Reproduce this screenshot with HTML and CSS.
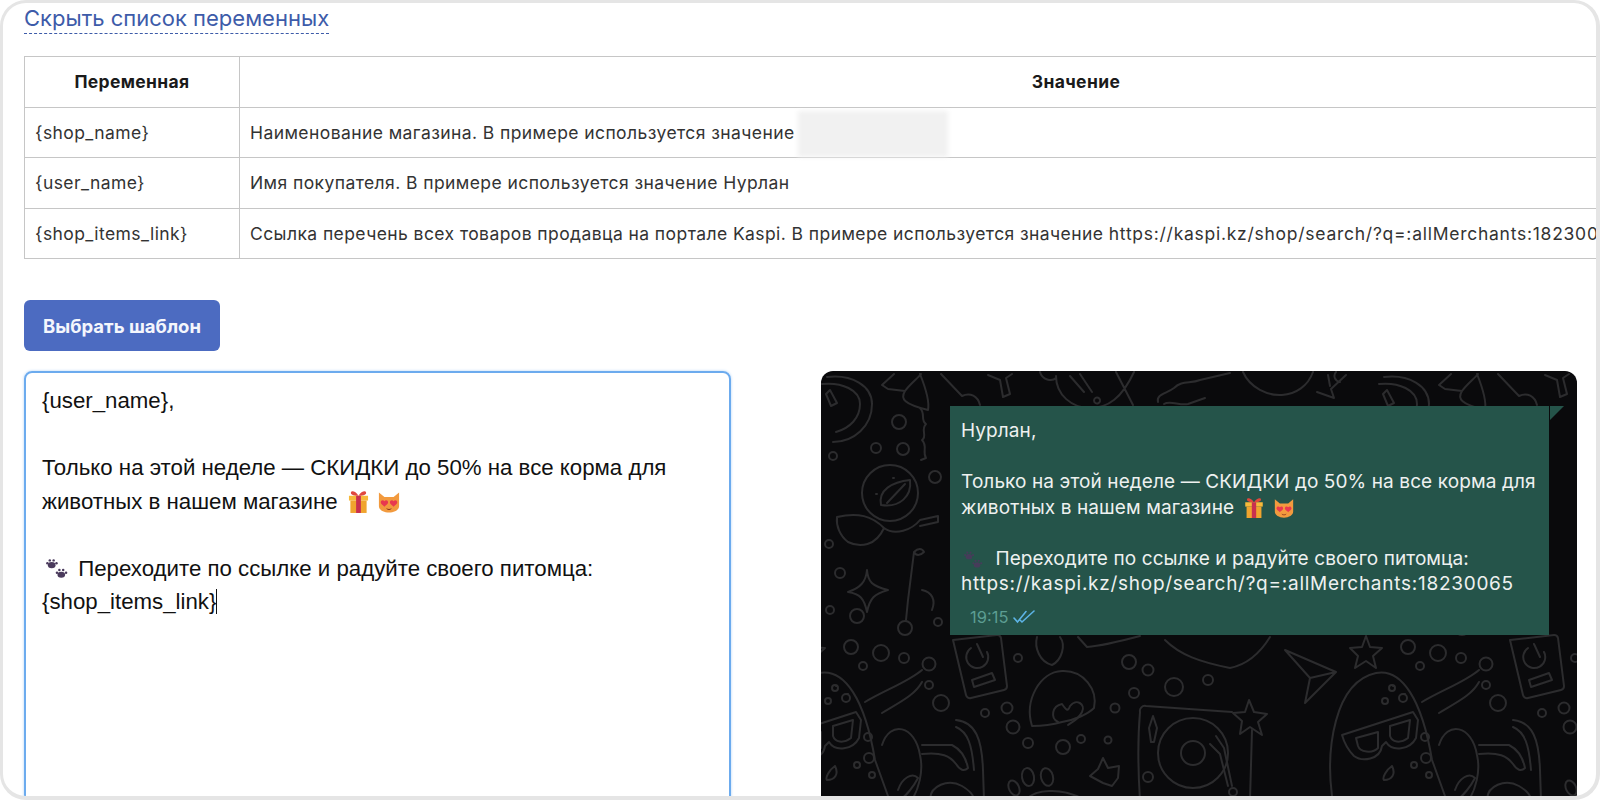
FILE: index.html
```html
<!DOCTYPE html>
<html lang="ru">
<head>
<meta charset="utf-8">
<title>Шаблон сообщения</title>
<link rel="stylesheet" href="styles.css">
</head>
<body>
<svg class="defs" width="0" height="0" aria-hidden="true">
  <defs>
    <symbol id="gift" viewBox="0 0 22 24">
      <path d="M11 6C8 1 3 0 3 3c0 2 4 3 8 3zm0 0c3-5 8-6 8-3 0 2-4 3-8 3z" fill="#e0483e"/>
      <rect x="1" y="6" width="20" height="5" fill="#f7b93a"/>
      <rect x="2.500" y="11" width="17" height="13" fill="#f0a42e"/>
      <rect x="8.500" y="6" width="5" height="18" fill="#c9304f"/>
    </symbol>
    <symbol id="cat" viewBox="0 0 24 22">
      <path d="M1 0l6 5h10l6-5v15c0 4-5 7-11 7S1 19 1 15z" fill="#f29a3e"/>
      <path d="M3 11c0-3 3-3 4-1.500C8 8 11 8 11 11c0 2-3 3-4 4.500C6 14 3 13 3 11zm10 0c0-3 3-3 4-1.500 1-1.500 4-1.500 4 1.500 0 2-3 3-4 4.500C16 14 13 13 13 11z" fill="#e8384f"/>
      <path d="M9 17c2 1.500 4 1.500 6 0-1 3-5 3-6 0z" fill="#8c3a1e"/>
    </symbol>
    <symbol id="paws" viewBox="0 0 24 22">
      <g fill="#4a3a5c">
        <ellipse cx="7" cy="7" rx="4" ry="3.200"/><circle cx="2.500" cy="5" r="1.300"/><circle cx="5" cy="2" r="1.300"/><circle cx="9" cy="2" r="1.300"/><circle cx="12" cy="5" r="1.300"/>
        <ellipse cx="17" cy="17" rx="4" ry="3.200"/><circle cx="12.500" cy="15" r="1.300"/><circle cx="15" cy="12" r="1.300"/><circle cx="19" cy="12" r="1.300"/><circle cx="22" cy="15" r="1.300"/>
      </g>
    </symbol>
  </defs>
</svg>
<div class="frame">
  <a class="toggle">Скрыть список переменных</a>
  <table class="vars">
    <thead>
      <tr><th class="col-name">Переменная</th><th>Значение</th></tr>
    </thead>
    <tbody>
      <tr><td>{shop_name}</td><td>Наименование магазина. В примере используется значение <span class="redact"></span></td></tr>
      <tr><td>{user_name}</td><td>Имя покупателя. В примере используется значение Нурлан</td></tr>
      <tr><td>{shop_items_link}</td><td>Ссылка перечень всех товаров продавца на портале Kaspi. В примере используется значение <span class="url-wide">https://kaspi.kz/shop/search/?q=:allMerchants:18230065</span></td></tr>
    </tbody>
  </table>
  <button class="pick" type="button">Выбрать шаблон</button>
  <div class="editor-row">
    <div class="editor">{user_name},<br><br>Только на этой неделе — СКИДКИ до 50% на все корма для<br>животных в нашем магазине <svg class="emoji e-gift"><use href="#gift"/></svg> <svg class="emoji e-cat"><use href="#cat"/></svg><br><br><svg class="emoji e-paws"><use href="#paws"/></svg> Переходите по ссылке и радуйте своего питомца:<br><span class="caret">{shop_items_link}</span></div>
    <div class="chat">
      <svg class="wallpaper" viewBox="821 371 756 440" fill="none" stroke="#2c2c2e" stroke-width="2" stroke-linecap="round" stroke-linejoin="round" aria-hidden="true">
        <defs>
          <g id="tile">
            <g id="dots">
              <circle cx="851" cy="647" r="7"/><circle cx="881" cy="653" r="8"/><circle cx="904" cy="658" r="5"/><circle cx="863" cy="666" r="4"/><circle cx="929" cy="664" r="6.500"/><circle cx="929" cy="685" r="4"/><circle cx="941" cy="703" r="8"/><circle cx="985" cy="713" r="4"/><circle cx="1007" cy="708" r="5.500"/><circle cx="1013" cy="727" r="6.500"/><circle cx="1028" cy="743" r="5"/><circle cx="1063" cy="747" r="7"/><circle cx="1081" cy="739" r="4"/><circle cx="1108" cy="740" r="3.500"/><circle cx="1115" cy="708" r="4.500"/><circle cx="1134" cy="693" r="5"/><circle cx="1148" cy="670" r="5.500"/><circle cx="1129" cy="662" r="7"/><circle cx="1174" cy="687" r="9"/><circle cx="1208" cy="680" r="5"/><circle cx="1018" cy="658" r="4"/><circle cx="835" cy="688" r="3"/><circle cx="846" cy="698" r="4"/><circle cx="828" cy="701" r="3"/><circle cx="868" cy="737" r="4"/><circle cx="869" cy="758" r="5"/><circle cx="857" cy="765" r="3"/><circle cx="872" cy="775" r="3"/>
              <circle cx="899" cy="422" r="7"/><circle cx="876" cy="448" r="5"/><circle cx="903" cy="449" r="6"/><circle cx="833" cy="456" r="4"/><circle cx="935" cy="477" r="6"/><circle cx="829" cy="544" r="4"/><circle cx="840" cy="573" r="5"/><circle cx="830" cy="610" r="4"/><circle cx="857" cy="616" r="7"/><circle cx="905" cy="628" r="7"/><circle cx="938" cy="622" r="4"/><circle cx="1148" cy="777" r="5"/>
            </g>
            <!-- crescent -->
            <path d="M827 377C852 374 872 386 872 404 872 426 854 442 833 442M822 384C842 382 860 390 860 404 860 418 850 428 836 432M830 390l7 13-6 3-5-12z"/>
            <!-- top strip -->
            <path d="M894 374L882 385 888 389 905 391C910 384 918 378 921 374M905 391C900 399 904 404 928 410 930 400 924 384 920 374"/>
            <path d="M941 374L962 396C970 392 978 396 980 405"/>
            <path d="M988 375L1000 380 1003 397 1010 394 1006 378 1012 374"/>
            <path d="M1040 372C1042 380 1052 382 1056 378M1056 376C1056 395 1072 408 1090 408 1108 408 1122 398 1134 372M1070 376L1084 392M1080 374L1092 392M1100 400A3 3 0 1 0 1100 401M1116 372L1133 405"/>
            <path d="M1158 402C1156 394 1166 394 1174 388 1182 380 1190 384 1200 380L1230 373M1164 404C1170 400 1180 406 1188 404L1205 398"/>
            <path d="M1243 372C1250 388 1268 396 1282 395 1296 394 1308 386 1313 372"/>
            <path d="M1317 392L1334 398 1331 389 1346 375M1330 386L1328 375M1336 372A6 6 0 0 0 1340 382"/>
            <!-- squiggle -->
            <path d="M920 408C926 414 920 420 926 424 920 430 928 436 922 440 928 446 922 452 926 458L921 460"/>
            <!-- bird -->
            <circle cx="890" cy="493" r="28"/>
            <path d="M881 505C878 490 892 482 910 480 912 496 900 508 881 505zM887 503L905 484M893 478h1M876 494h1"/>
            <path d="M837 517C858 512 872 516 884 528 876 546 860 548 848 542 840 536 836 526 837 517zM884 528C895 536 912 530 920 520L938 516M920 526L938 522M938 516V522"/>
            <!-- sparkle -->
            <path d="M867 570C868 582 872 586 888 590 874 594 870 598 867 612 864 598 860 594 848 592 860 588 866 582 867 570z"/>
            <path d="M914 552C918 548 922 548 924 552 920 556 916 556 914 552zM914 552L908 600 906 620M922 590C932 592 936 600 932 610"/>
            <!-- phone -->
            <path d="M953 640L997 635A4 4 0 0 1 1001 638L1007 686A4 4 0 0 1 1004 690L971 698A4 4 0 0 1 966 695L953 640z"/>
            <path d="M971 648A11 11 0 1 0 987 652M977 644L983 657"/>
            <path d="M972 680L992 673 995 680 974 687z"/>
            <!-- blobs below the bubble -->
            <path d="M1037 637C1034 648 1040 662 1052 665 1062 660 1066 645 1060 637"/>
            <path d="M1078 637L1087 647C1100 646 1125 640 1140 636"/>
            <path d="M1165 640C1180 655 1200 662 1230 668 1250 664 1262 650 1270 637"/>
            <!-- heart head -->
            <path d="M1032 726C1024 700 1040 672 1062 671 1084 670 1098 690 1094 708 1088 714 1075 720 1062 722 1048 726 1040 726 1032 726z"/>
            <path d="M1058 722C1050 718 1052 706 1062 704 1066 710 1068 712 1070 706 1076 698 1086 704 1082 712 1078 720 1072 722 1068 725 1062 724 1058 722z"/>
            <!-- turntable -->
            <path d="M1140 800C1138 770 1138 735 1140 712A5 5 0 0 1 1146 706L1232 712M1252 730L1250 800"/>
            <circle cx="1193" cy="753" r="35"/>
            <circle cx="1193" cy="753" r="12"/>
            <path d="M1153 716L1157 728 1154 742H1151L1149 728zM1216 736L1224 748 1232 786M1210 744L1220 754 1228 786"/>
            <circle cx="1233" cy="792" r="4"/>
            <path d="M1249 700L1254 712 1267 714 1258 722 1262 735 1250 727 1240 734 1242 721 1233 713 1245 712z"/>
            <!-- plane -->
            <path d="M1285 650L1336 672 1305 703 1310 678 1285 650zM1310 678L1336 672"/>
            <!-- star -->
            <path d="M1366 636L1370 647 1382 648 1373 656 1376 668 1366 661 1355 668 1358 656 1350 648 1362 647z"/>
            <!-- ghost with glasses -->
            <path d="M1332 796C1326 750 1334 682 1376 673 1402 668 1422 700 1432 760L1445 796"/>
            <path d="M1342 735L1413 712 1418 720 1416 738C1410 750 1392 752 1386 742L1382 746C1380 760 1362 762 1354 756 1348 750 1344 742 1342 735z"/>
            <path d="M1356 738L1378 732 1378 748C1372 754 1360 752 1358 746zM1390 726L1410 720 1408 738C1400 744 1392 742 1390 736z"/>
            <path d="M1393 686h1M1404 694h1M1392 766C1386 770 1382 778 1384 780 1392 780 1396 774 1392 766z"/>
            <!-- arm -->
            <path d="M865 702C885 690 908 682 922 670M882 713C900 702 915 695 922 682"/>
            <path d="M882 745C890 720 915 725 920 755 924 772 918 790 912 800"/>
            <path d="M922 745L952 745C962 750 966 758 968 768 964 772 960 770 956 764 950 756 942 752 922 754"/>
            <path d="M956 720C976 722 982 740 983 770L984 800M956 727C968 732 972 745 974 770"/>
            <path d="M930 800C930 786 948 778 962 786 972 792 974 796 974 800M898 790C902 778 912 772 918 778 914 786 906 796 900 800"/>
            <!-- paw -->
            <ellipse cx="1028" cy="777" rx="6" ry="9" transform="rotate(-10 1028 777)"/>
            <ellipse cx="1047" cy="777" rx="6" ry="9" transform="rotate(-15 1047 777)"/>
            <ellipse cx="1014" cy="788" rx="5" ry="8" transform="rotate(-25 1014 788)"/>
            <path d="M1026 800C1034 790 1060 786 1085 800"/>
            <!-- small star -->
            <path d="M1103 758L1108 768 1119 766 1118 778 1112 786 1103 783 1090 776 1098 769z"/>
          </g>
        </defs>
        <use href="#tile"/>
        <use href="#tile" x="557"/>
        <use href="#tile" x="-557"/>
      </svg>
      <div class="bubble">
        <div class="bubble-text">Нурлан,<br><br>Только на этой неделе — СКИДКИ до 50% на все корма для<br>животных в нашем магазине <svg class="emoji-sm e-gift-sm"><use href="#gift"/></svg> <svg class="emoji-sm e-cat-sm"><use href="#cat"/></svg><br><br><svg class="emoji-sm e-paws-sm"><use href="#paws"/></svg> Переходите по ссылке и радуйте своего питомца:<br><span class="url">https://kaspi.kz/shop/search/?q=:allMerchants:18230065</span></div>
        <div class="meta">
          <span class="time">19:15</span>
          <svg class="ticks" viewBox="0 0 22 14" fill="none" stroke="#5db4e6" stroke-width="1.600" stroke-linecap="round" aria-hidden="true"><path d="M1 8l3.500 4L13 1.500M7.500 10.500l1.500 1.500L21 1"/></svg>
        </div>
      </div>
    </div>
  </div>
</div>
</body>
</html>
```
FILE: styles.css
```css
* { box-sizing: border-box; }
html, body { margin: 0; padding: 0; background: #fff; }
.defs { position: absolute; }
.frame {
  width: 1600px;
  height: 800px;
  padding: 0 0 0 21px;
  background: #fff;
  border: solid #e5e5e5;
  border-width: 3px 4px 4px 3px;
  border-radius: 26px;
  overflow: hidden;
  font-family: Inter, "Liberation Sans", sans-serif;
}
.toggle {
  display: block;
  width: max-content;
  height: 31px;
  font-size: 22px;
  line-height: 30px;
  color: #3d5ba9;
  border-bottom: 1px dashed #3d5ba9;
}
.vars {
  margin-top: 22px;
  width: 1889px;
  table-layout: fixed;
  border-collapse: collapse;
  font-size: 17.500px;
  letter-spacing: .42px;
  color: #333;
}
.vars th, .vars td {
  height: 50.500px;
  padding: 0 10px;
  border: 1px solid #c6c6c6;
  white-space: nowrap;
  text-align: left;
  font-weight: 400;
}
.vars th {
  text-align: center;
  font-weight: 700;
  letter-spacing: .35px;
  color: #1a1a1a;
}
.col-name { width: 215px; }
.url-wide { letter-spacing: .74px; }
.redact {
  display: inline-block;
  width: 150px;
  height: 46px;
  margin: -16px 0 -16px -2px;
  vertical-align: middle;
  background: #f1f1f1;
  filter: blur(2px);
}
.pick {
  display: block;
  width: 196px;
  height: 51px;
  margin-top: 41px;
  padding: 0;
  border: 0;
  border-radius: 6px;
  background: #4c6bc1;
  color: #f4f6fc;
  font: 700 18.500px Inter, "Liberation Sans", sans-serif;
}
.editor-row {
  display: flex;
  gap: 90px;
  margin-top: 20px;
  align-items: flex-start;
}
.editor {
  flex: none;
  width: 707px;
  height: 460px;
  padding: 11px 16px;
  border: 2px solid #6cabee;
  border-radius: 8px;
  box-shadow: 0 0 3px #b4d4f7;
  font-family: "Liberation Sans", Arial, sans-serif;
  font-size: 22.250px;
  line-height: 33.500px;
  color: #111;
  white-space: nowrap;
}
.caret { border-right: 1px solid #111; }
.emoji { display: inline-block; vertical-align: -4px; }
.e-gift { width: 21px; height: 23px; margin-left: 4px; }
.e-cat { width: 22px; height: 21px; margin-left: 3px; }
.e-paws { width: 23px; height: 22px; margin: 0 4px 0 3px; }
.chat {
  position: relative;
  flex: none;
  width: 756px;
  height: 440px;
  padding: 35px 0 0 129px;
  border-radius: 12px;
  background: #0a0a0c;
  overflow: hidden;
}
.wallpaper {
  position: absolute;
  left: 0;
  top: 0;
  width: 756px;
  height: 440px;
  filter: blur(.4px);
}
.bubble {
  position: relative;
  width: 599px;
  height: 229px;
  padding: 12px 11px;
  background: #25544a;
}
.bubble::after {
  content: "";
  position: absolute;
  left: 600px;
  top: 0;
  border-style: solid;
  border-width: 14px 14px 0 0;
  border-color: #25544a transparent transparent transparent;
}
.bubble-text {
  font-size: 19px;
  letter-spacing: .1px;
  line-height: 25.500px;
  color: #eef1f0;
  white-space: nowrap;
}
.url { letter-spacing: .73px; }
.emoji-sm { display: inline-block; vertical-align: -4px; }
.e-gift-sm { width: 20px; height: 21px; margin-left: 4px; }
.e-cat-sm { width: 20px; height: 19px; margin-left: 5px; }
.e-paws-sm { width: 20px; height: 18px; margin: 0 7px 0 2px; opacity: .9; }
.meta {
  display: flex;
  align-items: center;
  gap: 5px;
  margin: 10px 0 0 9px;
}
.time { font-size: 16.500px; line-height: 20px; color: #5c9d92; }
.ticks { width: 22px; height: 14px; }
```
